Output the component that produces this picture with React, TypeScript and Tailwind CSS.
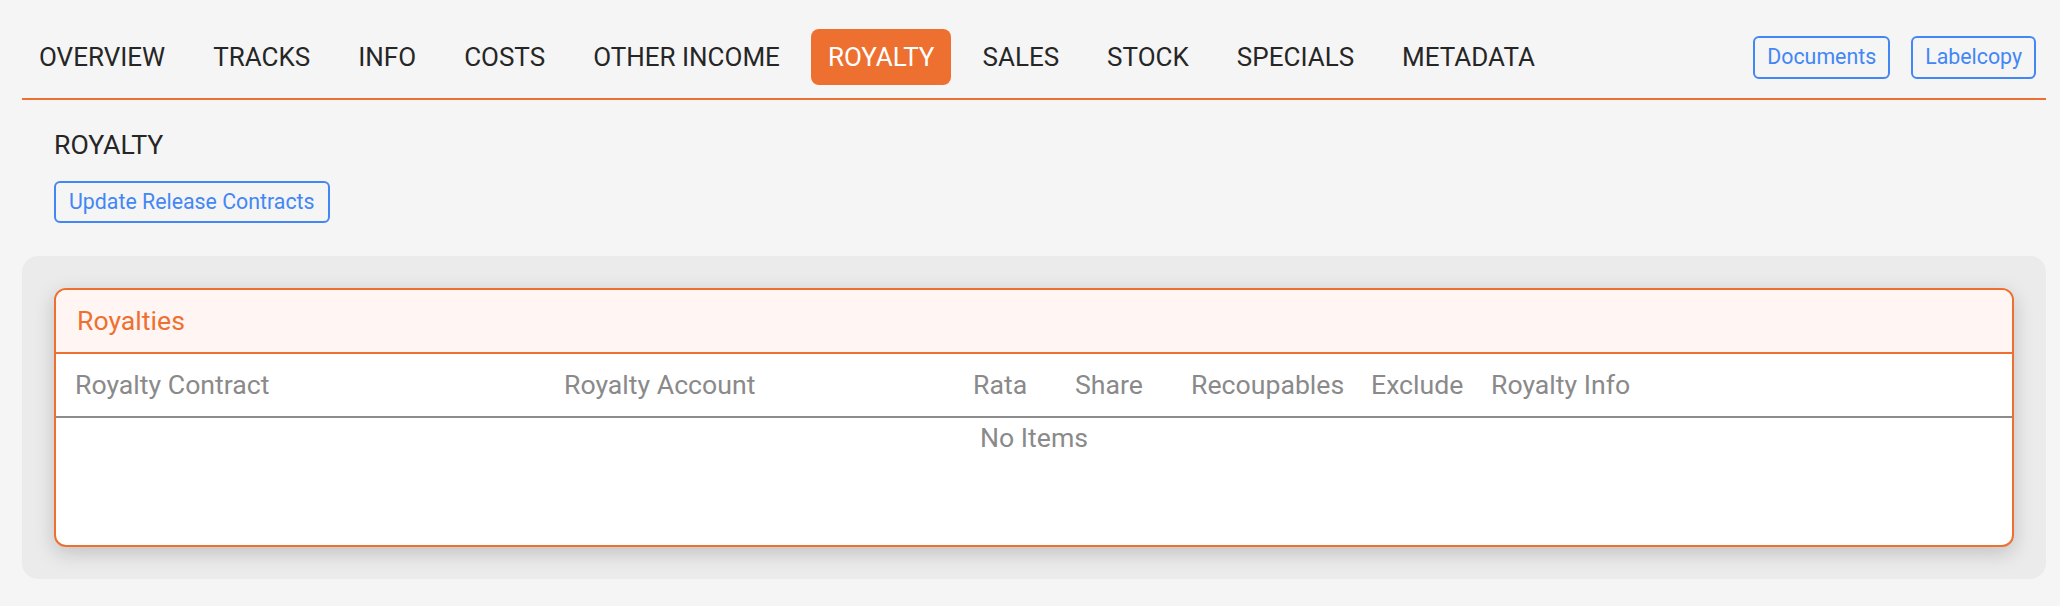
import React from "react";

const navItems = [
  "OVERVIEW",
  "TRACKS",
  "INFO",
  "COSTS",
  "OTHER INCOME",
  "ROYALTY",
  "SALES",
  "STOCK",
  "SPECIALS",
  "METADATA",
];

export default function App() {
  return (
    <div className="min-h-screen bg-[#f5f5f5] font-[Roboto,sans-serif] text-[#262626]">
      {/* Nav */}
      <div className="ml-[22px] mr-[14px] flex items-center justify-between border-b-2 border-[#ee7031] pt-[29px] pb-[13px]">
        <div className="flex items-center gap-[14px]">
          {navItems.map((item) =>
            item === "ROYALTY" ? (
              <div
                key={item}
                className="flex h-[56px] items-center rounded-[8px] bg-[#ee7031] px-[17px] text-[26px] leading-none text-white"
              >
                {item}
              </div>
            ) : (
              <div
                key={item}
                className="flex h-[56px] items-center px-[17px] text-[26px] leading-none text-[#262626]"
              >
                {item}
              </div>
            )
          )}
        </div>
        <div className="flex items-center gap-[21px] pr-[10px]">
          <button className="flex h-[43px] items-center rounded-[6px] border-2 border-[#4287f5] px-[12px] text-[21.33px] leading-none text-[#4287f5]">
            Documents
          </button>
          <button className="flex h-[43px] items-center rounded-[6px] border-2 border-[#4287f5] px-[12px] text-[21.33px] leading-none text-[#4287f5]">
            Labelcopy
          </button>
        </div>
      </div>

      {/* Content */}
      <div className="ml-[22px] mr-[14px]">
        <div className="pl-[32px] pt-[29px]">
          <div className="h-[32px] text-[26.67px] leading-[32px] text-[#262626]">ROYALTY</div>
          <div className="mt-[20px] flex">
            <button className="flex h-[42px] items-center rounded-[6px] border-2 border-[#4287f5] px-[13px] text-[21.33px] leading-none text-[#4287f5]">
              Update Release Contracts
            </button>
          </div>
        </div>

        <div className="mt-[33px] rounded-[16px] bg-[#ebebeb] p-[32px]">
          <div className="overflow-hidden rounded-[12px] border-2 border-[#ee7031] bg-white shadow-[0_6px_20px_rgba(0,0,0,0.18)]">
            <div className="flex h-[64px] items-center border-b-2 border-[#ee7031] bg-[#fff5f2] px-[21px] text-[26.67px] leading-none text-[#ee7031]">
              Royalties
            </div>
            <div className="grid h-[64px] grid-cols-[489px_409px_102px_116px_180px_120px_1fr] items-center border-b-2 border-[#8c8c8c] pl-[19px] text-[26.67px] leading-none text-[#8a8a8a]">
              <div>Royalty Contract</div>
              <div>Royalty Account</div>
              <div>Rata</div>
              <div>Share</div>
              <div>Recoupables</div>
              <div>Exclude</div>
              <div>Royalty Info</div>
            </div>
            <div className="h-[127px]">
              <div className="h-[40px] text-center text-[26.67px] leading-[40px] text-[#8a8a8a]">No Items</div>
            </div>
          </div>
        </div>
      </div>
    </div>
  );
}
